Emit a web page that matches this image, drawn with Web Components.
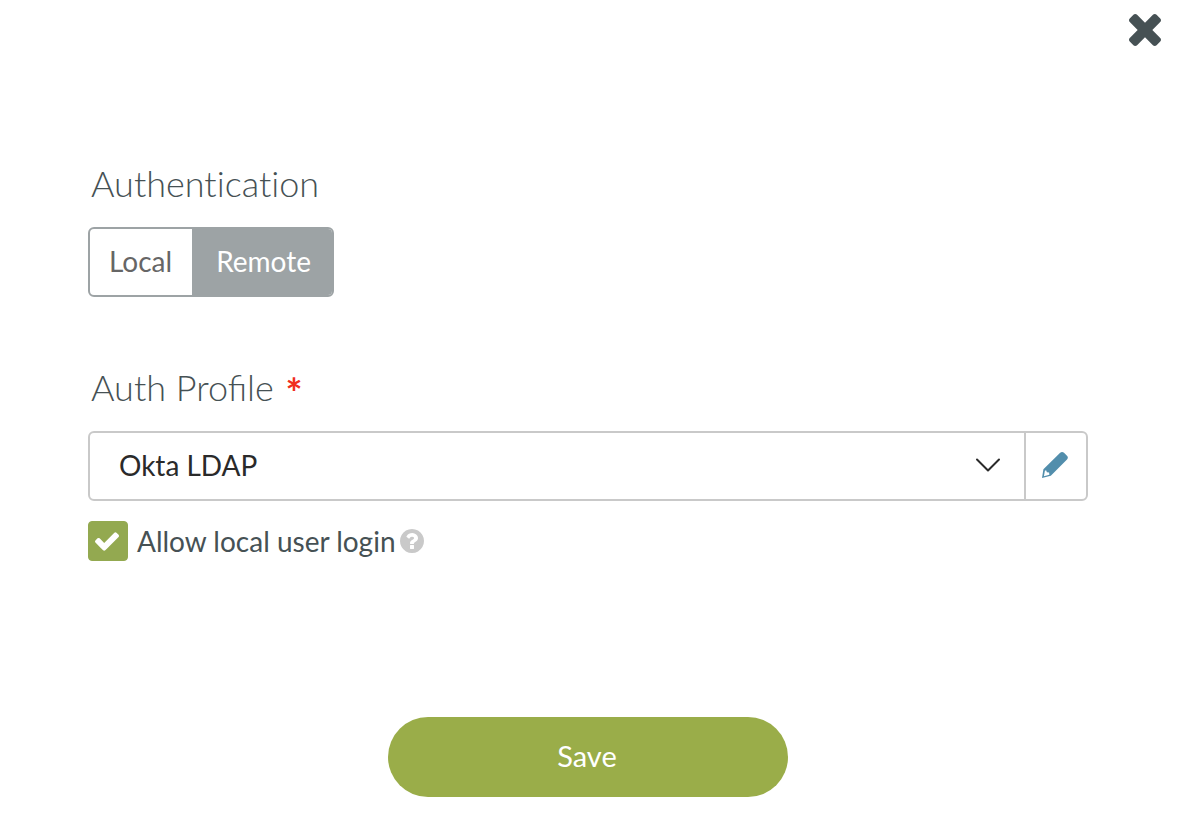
<!DOCTYPE html>
<html lang="en">
<head>
<meta charset="utf-8">
<title>Authentication</title>
<style>
  body { margin: 0; background: #fff; color: #465154; font: 28px/40px Lato, "Open Sans", sans-serif; }
</style>
</head>
<body>
<auth-dialog></auth-dialog>
<script>
const define = (name, html, setup) => {
  const template = document.createElement('template');
  template.innerHTML = `<style>
    * { box-sizing: border-box; }
    button, select { font: inherit; margin: 0; padding: 0; border: 0; background: none; cursor: pointer; }
    svg { display: block; }
  </style>` + html;
  customElements.define(name, class extends HTMLElement {
    constructor() {
      super();
      this.attachShadow({ mode: 'open' }).append(template.content.cloneNode(true));
      if (setup) setup(this.shadowRoot, this);
    }
  });
};

define('close-button', `
  <style>
    :host { display: block; }
    button { display: block; color: #465154; }
  </style>
  <button type="button" aria-label="Close">
    <svg width="32" height="32" viewBox="302 366 1188 1188" fill="currentColor"><path d="M1490 1322q0 40-28 68l-136 136q-28 28-68 28t-68-28l-294-294-294 294q-28 28-68 28t-68-28l-136-136q-28-28-28-68t28-68l294-294-294-294q-28-28-28-68t28-68l136-136q28-28 68-28t68 28l294 294 294-294q28-28 68-28t68 28l136 136q28 28 28 68t-28 68l-294 294 294 294q28 28 28 68z"/></svg>
  </button>`);

define('form-section', `
  <style>
    :host { display: block; }
    h2 { margin: 0 0 22px; padding-left: 3px; font-size: 36px; line-height: 44px; font-weight: 300; }
  </style>
  <h2><slot name="title"></slot></h2>
  <slot></slot>`);

define('required-mark', `
  <style>
    :host { display: inline-block; height: 44px; margin-left: 2px; vertical-align: top; color: #f02d1d; font-size: 40px; font-weight: 700; line-height: 56px; }
  </style>
  <span aria-label="required">*</span>`);

define('segmented-switch', `
  <style>
    :host { display: flex; }
    div { display: flex; height: 70px; border: 2px solid #9da3a5; border-radius: 6px; overflow: hidden; }
    button { padding: 0 20px 2px 19px; color: #666; }
    button[aria-pressed="true"] { padding: 0 21px 2px 24px; background: #9da3a5; color: #fff; }
  </style>
  <div role="group" aria-label="Authentication">
    <button type="button" aria-pressed="false">Local</button>
    <button type="button" aria-pressed="true">Remote</button>
  </div>`, root => {
    const buttons = root.querySelectorAll('button');
    buttons.forEach(b => b.addEventListener('click', () =>
      buttons.forEach(o => o.setAttribute('aria-pressed', o === b))));
  });

define('profile-picker', `
  <style>
    :host { display: block; }
    .field { display: grid; grid-template-columns: 1fr 62px; height: 70px; border: 2px solid #c9c9c9; border-radius: 6px; }
    .choice { display: grid; align-items: center; }
    select, .choice svg { grid-area: 1 / 1; }
    select { appearance: none; width: 100%; height: 100%; padding: 0 64px 2px 29px; color: #2a2a2a; }
    .choice svg { justify-self: end; margin: 0 23px 2px 0; pointer-events: none; }
    button { display: grid; place-items: center; padding: 0 2px 2px 0; border-left: 2px solid #c9c9c9; color: #528eac; }
  </style>
  <div class="field">
    <div class="choice">
      <select aria-label="Auth Profile"><option>Okta LDAP</option></select>
      <svg width="26" height="16" viewBox="0 0 26 16" fill="none" stroke="#2a2a2a" stroke-width="2" stroke-linecap="round" stroke-linejoin="round"><path d="M2 2.5 13 13.5 24 2.5"/></svg>
    </div>
    <button type="button" aria-label="Edit profile">
      <svg width="26" height="26" viewBox="0 0 26 26" fill="currentColor" fill-rule="evenodd"><path d="M0 26 1.4 17.2 17.9 1Q20 -.8 22 .8L25.2 4Q26.6 5.6 25 7.4L8.8 23.8ZM1.9 24.2 7.4 22.7 7.1 20.6 4.9 20.2 4.1 18.2 2.9 18.7Z"/></svg>
    </button>
  </div>`);

define('check-option', `
  <style>
    :host { display: flex; align-items: center; gap: 4px; height: 40px; }
    label { display: flex; align-items: center; gap: 9px; cursor: pointer; }
    .box { display: grid; place-items: center; width: 40px; height: 40px; }
    .box > * { grid-area: 1 / 1; }
    input { appearance: none; width: 100%; height: 100%; margin: 0; border: 1px solid #93a950; border-radius: 4px; }
    input:checked { background: #93a950; }
    .box svg { margin-right: 2px; pointer-events: none; }
    .help { color: #c9c9c9; }
  </style>
  <label>
    <span class="box">
      <input type="checkbox" checked>
      <svg width="24" height="19" viewBox="121 334 1550 1188" fill="#fff"><path d="M1671 566q0 40-28 68l-724 724-136 136q-28 28-68 28t-68-28l-136-136-362-362q-28-28-28-68t28-68l136-136q28-28 68-28t68 28l294 295 656-657q28-28 68-28t68 28l136 136q28 28 28 68z"/></svg>
    </span>
    <slot></slot>
  </label>
  <button class="help" type="button" aria-label="Help">
    <svg width="24" height="24" viewBox="128 128 1536 1536" fill="currentColor"><path d="M1024 1376v-192q0-14-9-23t-23-9h-192q-14 0-23 9t-9 23v192q0 14 9 23t23 9h192q14 0 23-9t9-23zm256-672q0-88-55.5-163t-138.5-116-170-41q-243 0-371 213-15 24 8 42l132 100q7 6 19 6 16 0 25-12 53-68 86-92 34-24 86-24 48 0 85.5 26t37.5 59q0 38-20 61t-68 45q-63 28-115.5 86.5t-52.5 125.5v36q0 14 9 23t23 9h192q14 0 23-9t9-23q0-19 21.5-49.5t54.5-49.5q32-18 49-28.5t46-35 44.5-48 28-60.5 12.5-81zm384 192q0 209-103 385.5t-279.5 279.5-385.5 103-385.5-103-279.5-279.5-103-385.5 103-385.5 279.5-279.5 385.5-103 385.5 103 279.5 279.5 103 385.5z"/></svg>
  </button>`);

define('save-button', `
  <style>
    :host { display: flex; justify-content: center; }
    button { width: 400px; max-width: 100%; height: 80px; padding: 0 2px 2px 0; border-radius: 40px; background: #9aad49; color: #fff; font-size: 29px; }
  </style>
  <button type="submit"><slot></slot></button>`);

define('auth-dialog', `
  <style>
    :host { display: block; }
    header { display: flex; justify-content: flex-end; padding: 14px 19px 0; }
    main { padding: 115px 92px 20px 88px; }
    .plain { font-variant-ligatures: none; }
    form-section + form-section { margin-top: 68px; }
    check-option { margin-top: 20px; }
    save-button { margin-top: 156px; }
  </style>
  <header><close-button></close-button></header>
  <main>
    <form-section>
      <span slot="title" class="plain">Authentication</span>
      <segmented-switch></segmented-switch>
    </form-section>
    <form-section>
      <span slot="title">Auth Profile <required-mark></required-mark></span>
      <profile-picker></profile-picker>
      <check-option>Allow local user login</check-option>
    </form-section>
    <save-button>Save</save-button>
  </main>`);
</script>
</body>
</html>
